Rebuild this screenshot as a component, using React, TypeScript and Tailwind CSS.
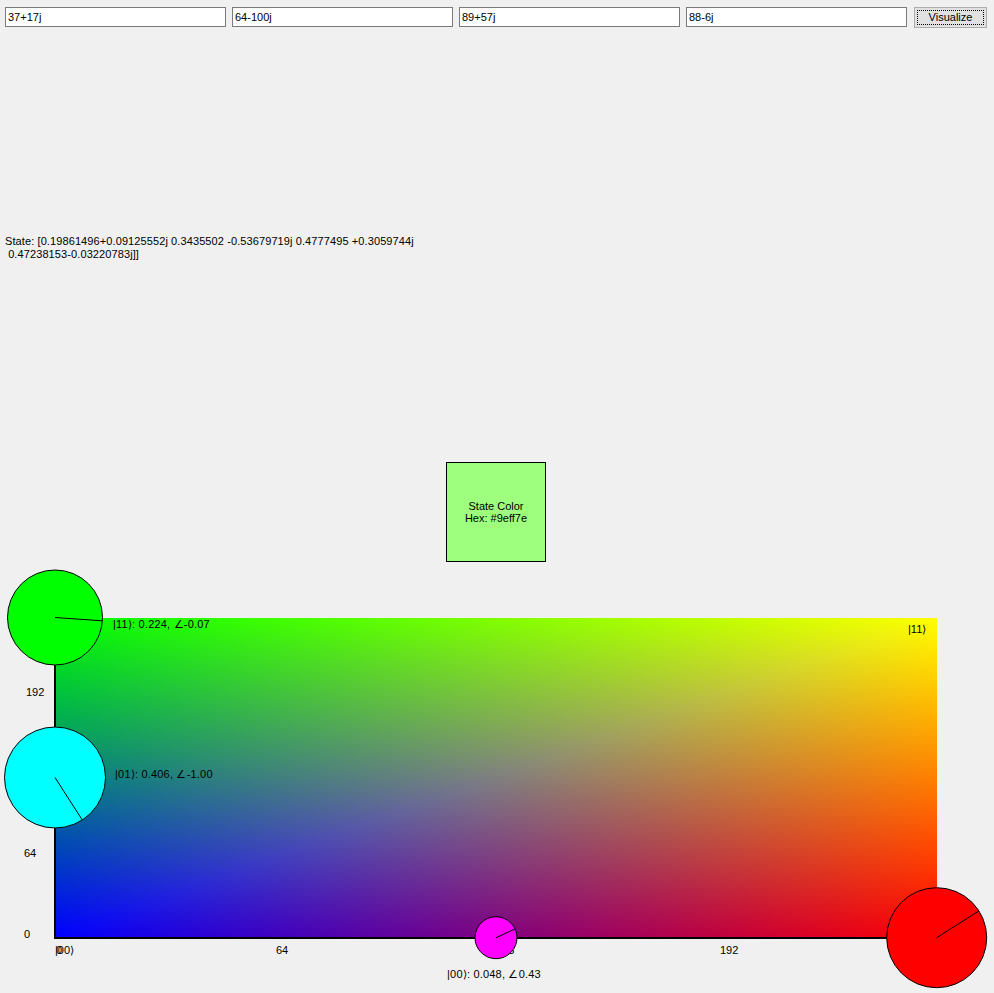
import React from 'react';

const inputs = ['37+17j', '64-100j', '89+57j', '88-6j'];

// amplitude circles, coordinates inside the plot box
const circles = [
  { cx: 55, cy: 55.5, r: 47.5, a: -0.07, fill: '#00ff00' },
  { cx: 55, cy: 215.5, r: 50.5, a: -1.0, fill: '#00ffff' },
  { cx: 496, cy: 375.7, r: 21, a: 0.43, fill: '#ff00ff' },
  { cx: 936.7, cy: 375.7, r: 50, a: 0.565, fill: '#ff0000' },
];

function Plot() {
  return (
    <div className="relative h-[431px] w-[994px]">
      {/* colour field: r = x, g = y, b = 255 - max(x, y) */}
      <div className="absolute left-[56px] top-[56px] h-[319px] w-[881px] isolate overflow-hidden">
        <div className="absolute inset-0 bg-[linear-gradient(to_right,#0000ff,#000000)]" />
        <div className="absolute inset-0 bg-[linear-gradient(to_top,#0000ff,#000000)] mix-blend-darken" />
        <div className="absolute inset-0 bg-[linear-gradient(to_right,#000000,#ff0000)] mix-blend-screen" />
        <div className="absolute inset-0 bg-[linear-gradient(to_top,#000000,#00ff00)] mix-blend-screen" />
      </div>
      {/* axes */}
      <div className="absolute left-[54px] top-[56px] h-[321px] w-[2px] bg-black" />
      <div className="absolute left-[54px] top-[375px] h-[2px] w-[883px] bg-black" />

      {/* tick labels */}
      <span className="absolute left-[26px] top-[124px] leading-[13px]">192</span>
      <span className="absolute left-[25px] top-[205px] leading-[13px]">128</span>
      <span className="absolute left-[24px] top-[285px] leading-[13px]">64</span>
      <span className="absolute left-[24px] top-[366px] leading-[13px]">0</span>
      <span className="absolute left-[56px] top-[382px] leading-[13px]">0</span>
      <span className="absolute left-[276px] top-[382px] leading-[13px]">64</span>
      <span className="absolute left-[496px] top-[382px] leading-[13px]">128</span>
      <span className="absolute left-[720px] top-[382px] leading-[13px]">192</span>
      <span className="absolute left-[55px] top-[382px] leading-[13px]">|00⟩</span>

      <svg className="absolute left-0 top-0" width="994" height="431">
        {circles.map((c, i) => (
          <g key={i}>
            <circle cx={c.cx} cy={c.cy} r={c.r} fill={c.fill} stroke="#000" strokeWidth="1" />
            <line
              x1={c.cx}
              y1={c.cy}
              x2={c.cx + c.r * Math.cos(c.a)}
              y2={c.cy - c.r * Math.sin(c.a)}
              stroke="#000"
              strokeWidth="1"
            />
          </g>
        ))}
      </svg>

      <span className="absolute left-[113px] top-[56px] leading-[13px] tracking-[0.2px] whitespace-nowrap">|11⟩: 0.224, ∠-0.07</span>
      <span className="absolute left-[115px] top-[206px] leading-[13px] tracking-[0.2px] whitespace-nowrap">|01⟩: 0.406, ∠-1.00</span>
      <span className="absolute left-[447px] top-[406px] leading-[13px] tracking-[0.2px] whitespace-nowrap">|00⟩: 0.048, ∠0.43</span>
      <span className="absolute left-[908px] top-[61px] leading-[13px] whitespace-nowrap">|11⟩</span>
    </div>
  );
}

export default function App() {
  return (
    <div className="h-[993px] w-[994px] overflow-hidden bg-[#f0f0f0] font-['Liberation_Sans',sans-serif] text-[11px] text-black">
      <div className="flex items-start gap-[6px] pl-[5px] pt-[7px]">
        {inputs.map((v, i) => (
          <input
            key={i}
            defaultValue={v}
            className="h-[20px] w-[221px] border border-[#7a7a7a] bg-white px-[2px] text-[11px] outline-none"
          />
        ))}
        <button className="ml-[1px] flex h-[21px] w-[73px] items-center justify-center border border-[#adadad] bg-[#e1e1e1] p-[2px]">
          <span className="flex h-full w-full items-center justify-center border border-dotted border-black">
            Visualize
          </span>
        </button>
      </div>

      <div className="mt-[207px] whitespace-pre pl-[5px] leading-[13px] tracking-[0.1px]">
        {'State: [0.19861496+0.09125552j 0.3435502 -0.53679719j 0.4777495 +0.3059744j\n 0.47238153-0.03220783j]]'}
      </div>

      <div className="ml-[446px] mt-[201px] flex h-[100px] w-[100px] flex-col items-center justify-center border border-black bg-[#9eff7e] leading-[12.5px]">
        <span>State Color</span>
        <span>Hex: #9eff7e</span>
      </div>

      <Plot />
    </div>
  );
}
